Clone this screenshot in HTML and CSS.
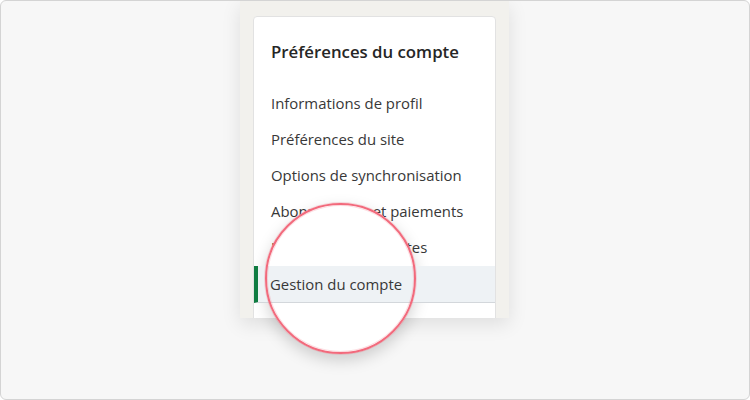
FILE: index.html
```html
<!DOCTYPE html>
<html lang="fr">
<head>
<meta charset="utf-8">
<link rel="stylesheet" href="styles.css">
</head>
<body>
<div class="frame">
  <div class="lens"></div>
  <div class="panel">
    <div class="card">
      <h2 class="card-title">Préférences du compte</h2>
      <ul class="menu">
        <li class="menu-item">Informations de profil</li>
        <li class="menu-item">Préférences du site</li>
        <li class="menu-item">Options de synchronisation</li>
        <li class="menu-item">Abonnements et paiements</li>
        <li class="menu-item">Notifications et alertes</li>
        <li class="menu-item active">Gestion du compte</li>
      </ul>
    </div>
  </div>
  <div class="lens-ring"></div>
</div>
</body>
</html>
```
FILE: styles.css
```css
* { box-sizing: border-box; }
html, body { margin: 0; padding: 0; }
body {
  font-family: "Open Sans", "Noto Sans", sans-serif;
  background: #ffffff;
}
.frame {
  position: relative;
  width: 750px;
  height: 400px;
  border: 1px solid #d4d4d4;
  border-radius: 6px;
  background: #f7f7f7;
  overflow: hidden;
  display: flex;
  justify-content: center;
  align-items: flex-start;
}
.panel {
  width: 269px;
  height: 317px;
  margin-left: -1px;
  background: #f2f1ed;
  padding: 15px 13px 0;
  overflow: hidden;
  box-shadow: 0 6px 18px rgba(0, 0, 0, 0.10);
}
.card {
  background: #ffffff;
  border: 1px solid #e2e2e2;
  border-radius: 4px;
  height: 340px;
}
.card-title {
  margin: 0;
  padding: 23px 17px 0;
  font-size: 16.8px;
  line-height: 24px;
  font-weight: 600;
  color: #262626;
}
.menu {
  list-style: none;
  margin: 21px 0 0;
  padding: 0;
}
.menu-item {
  height: 36px;
  line-height: 36px;
  padding-left: 17px;
  font-size: 14.9px;
  color: #383838;
  white-space: nowrap;
}
.menu-item.active {
  position: relative;
  z-index: 2;
  margin-top: 1px;
  height: 37px;
  background: #eef2f5;
  border-left: 4px solid #107c41;
  padding-left: 12px;
  border-bottom: 1px solid #d3d7db;
}
.lens,
.lens-ring {
  position: absolute;
  left: 264px;
  top: 202px;
  width: 151px;
  height: 151px;
  border-radius: 50%;
}
.lens {
  z-index: 1;
  background: #ffffff;
  box-shadow: 0 6px 16px rgba(0, 0, 0, 0.18);
}
.lens-ring {
  z-index: 3;
  border: 2px solid #f26a7c;
  box-shadow: 0 0 0 1px rgba(242, 106, 124, 0.22), inset 0 0 0 1px rgba(242, 106, 124, 0.22);
  pointer-events: none;
}
```
